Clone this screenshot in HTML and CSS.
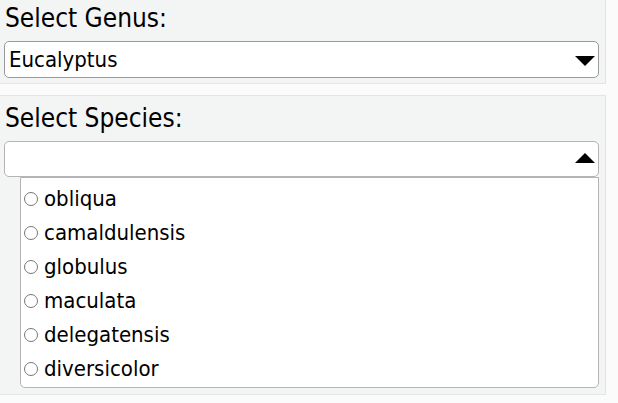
FILE: index.html
```html
<!DOCTYPE html>
<html>
<head>
<meta charset="utf-8">
<link rel="stylesheet" href="styles.css">
</head>
<body>
<div class="panel panel-genus">
  <div class="label">Select Genus:</div>
  <div class="select">
    <span class="value">Eucalyptus</span>
    <span class="arrow down"></span>
  </div>
</div>
<div class="panel panel-species">
  <div class="label">Select Species:</div>
  <div class="select open">
    <span class="value"></span>
    <span class="arrow up"></span>
  </div>
  <ul class="listbox">
    <li class="option"><span class="radio"></span><span class="opt-text">obliqua</span></li>
    <li class="option"><span class="radio"></span><span class="opt-text">camaldulensis</span></li>
    <li class="option"><span class="radio"></span><span class="opt-text">globulus</span></li>
    <li class="option"><span class="radio"></span><span class="opt-text">maculata</span></li>
    <li class="option"><span class="radio"></span><span class="opt-text">delegatensis</span></li>
    <li class="option"><span class="radio"></span><span class="opt-text">diversicolor</span></li>
  </ul>
</div>
</body>
</html>
```
FILE: styles.css
```css
html, body {
  margin: 0;
  padding: 0;
  background: #fbfbfb;
  font-family: "DejaVu Sans Condensed", "DejaVu Sans", sans-serif;
  color: #000;
}
.panel {
  width: 595px;
  margin-left: -1px;
  background: #f3f4f4;
  border: 1px solid #e3e4e4;
  padding: 4px 6px 5px 4px;
}
.panel-genus {
  margin-top: -5px;
  margin-bottom: 11px;
}
.panel-species {
  padding-bottom: 6px;
}
.label {
  font-size: 26px;
  line-height: 36px;
  height: 36px;
  padding-left: 1px;
  margin-bottom: 5px;
}
.select {
  box-sizing: border-box;
  height: 37px;
  background: #fff;
  border: 1px solid #9a9a9a;
  border-radius: 5px;
  display: flex;
  align-items: center;
  justify-content: space-between;
  padding: 0 3px 0 4px;
}
.select.open {
  border-color: #b4b4b4;
  height: 36px;
}
.value {
  font-size: 22px;
}
.arrow {
  width: 0;
  height: 0;
  border-left: 10px solid transparent;
  border-right: 10px solid transparent;
}
.arrow.down {
  border-top: 10px solid #000;
  margin-top: 2px;
}
.arrow.up {
  border-bottom: 10px solid #000;
  margin-top: -2px;
}
.listbox {
  list-style: none;
  margin: 0 0 0 16px;
  padding: 3px 0 3px 0;
  background: #fff;
  border: 1px solid #b4b4b4;
  border-radius: 0 0 5px 5px;
  height: 211px;
  box-sizing: border-box;
}
.option {
  height: 34px;
  display: flex;
  align-items: center;
  padding-left: 3px;
  font-size: 22px;
}
.radio {
  width: 14px;
  height: 14px;
  box-sizing: border-box;
  border: 1px solid #777;
  border-radius: 50%;
  background: #fff;
  margin-right: 6px;
  margin-top: 1px;
}
```
